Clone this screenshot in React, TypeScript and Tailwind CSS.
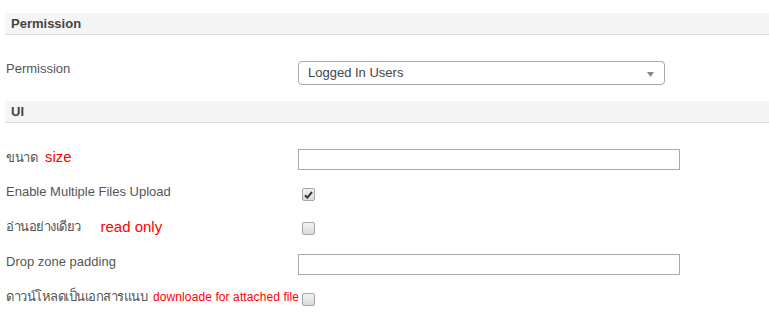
import React from "react";

const font = { fontFamily: '"Liberation Sans", Arial, "Noto Sans", sans-serif' };

function Header({ title }: { title: string }) {
  return (
    <div className="ml-[5px] h-[22px] bg-[#f5f5f5] border-b border-[#dddddd] pl-[6px] text-[13px] leading-[21px] font-bold text-[#444444]">
      {title}
    </div>
  );
}

function Checkbox({ checked }: { checked?: boolean }) {
  return (
    <span className="mt-[4px] ml-[4px] flex h-[13px] w-[13px] items-center justify-center rounded-[2px] border border-[#a6a6a6] bg-gradient-to-b from-[#f2f2f2] to-[#dadada]">
      {checked && (
        <svg width="9" height="8" viewBox="0 0 9 8">
          <path d="M1 4.2 L3.3 6.6 L8 1" fill="none" stroke="#3b3b3b" strokeWidth="2" />
        </svg>
      )}
    </span>
  );
}

function Row({ mt, label, children }: { mt: string; label: React.ReactNode; children: React.ReactNode }) {
  return (
    <div className={`flex items-start ${mt}`}>
      <div className="ml-[6px] w-[292px] shrink-0 -mt-[1px] whitespace-nowrap text-[13px] leading-[18px] text-[#555555]">
        {label}
      </div>
      {children}
    </div>
  );
}

function TextInput() {
  return <div className="h-[21px] w-[382px] border border-[#a9a9a9] bg-white" />;
}

export default function App() {
  return (
    <div className="h-[323px] w-[769px] overflow-hidden bg-white pt-[13px]" style={font}>
      <Header title="Permission" />
      <div className="flex items-start mt-[26px]">
        <div className="ml-[6px] w-[292px] shrink-0 -mt-[1px] text-[13px] leading-[18px] text-[#555555]">Permission</div>
        <div className="relative flex h-[24px] w-[367px] items-center rounded-[4px] border border-[#aaaaaa] bg-white pl-[9px] text-[13px] text-[#444444]">
          Logged In Users
          <svg className="absolute right-[10px] top-[10px]" width="7" height="5" viewBox="0 0 7 5">
            <path d="M0 0 H7 L3.5 5 Z" fill="#888888" />
          </svg>
        </div>
      </div>
      <div className="mt-[16px]">
        <Header title="UI" />
      </div>
      <Row
        mt="mt-[26px]"
        label={
          <>
            <span className="tracking-[-0.5px]">ขนาด</span>
            <span className="ml-[8px] text-[15px] text-[#ff0000]">size</span>
          </>
        }
      >
        <TextInput />
      </Row>
      <Row mt="mt-[14px]" label="Enable Multiple Files Upload">
        <Checkbox checked />
      </Row>
      <Row
        mt="mt-[17px]"
        label={
          <>
            <span className="tracking-[-0.5px]">อ่านอย่างเดียว</span>
            <span className="ml-[20px] relative top-[1px] text-[15px] text-[#ff0000]">read only</span>
          </>
        }
      >
        <Checkbox />
      </Row>
      <Row mt="mt-[18px]" label="Drop zone padding">
        <TextInput />
      </Row>
      <Row
        mt="mt-[14px]"
        label={
          <>
            <span className="tracking-[-0.5px]">ดาวน์โหลดเป็นเอกสารแนบ</span>
            <span className="ml-[6px] text-[12px] tracking-[0.1px] text-[#ff0000]">downloade for attached file</span>
          </>
        }
      >
        <Checkbox />
      </Row>
    </div>
  );
}
